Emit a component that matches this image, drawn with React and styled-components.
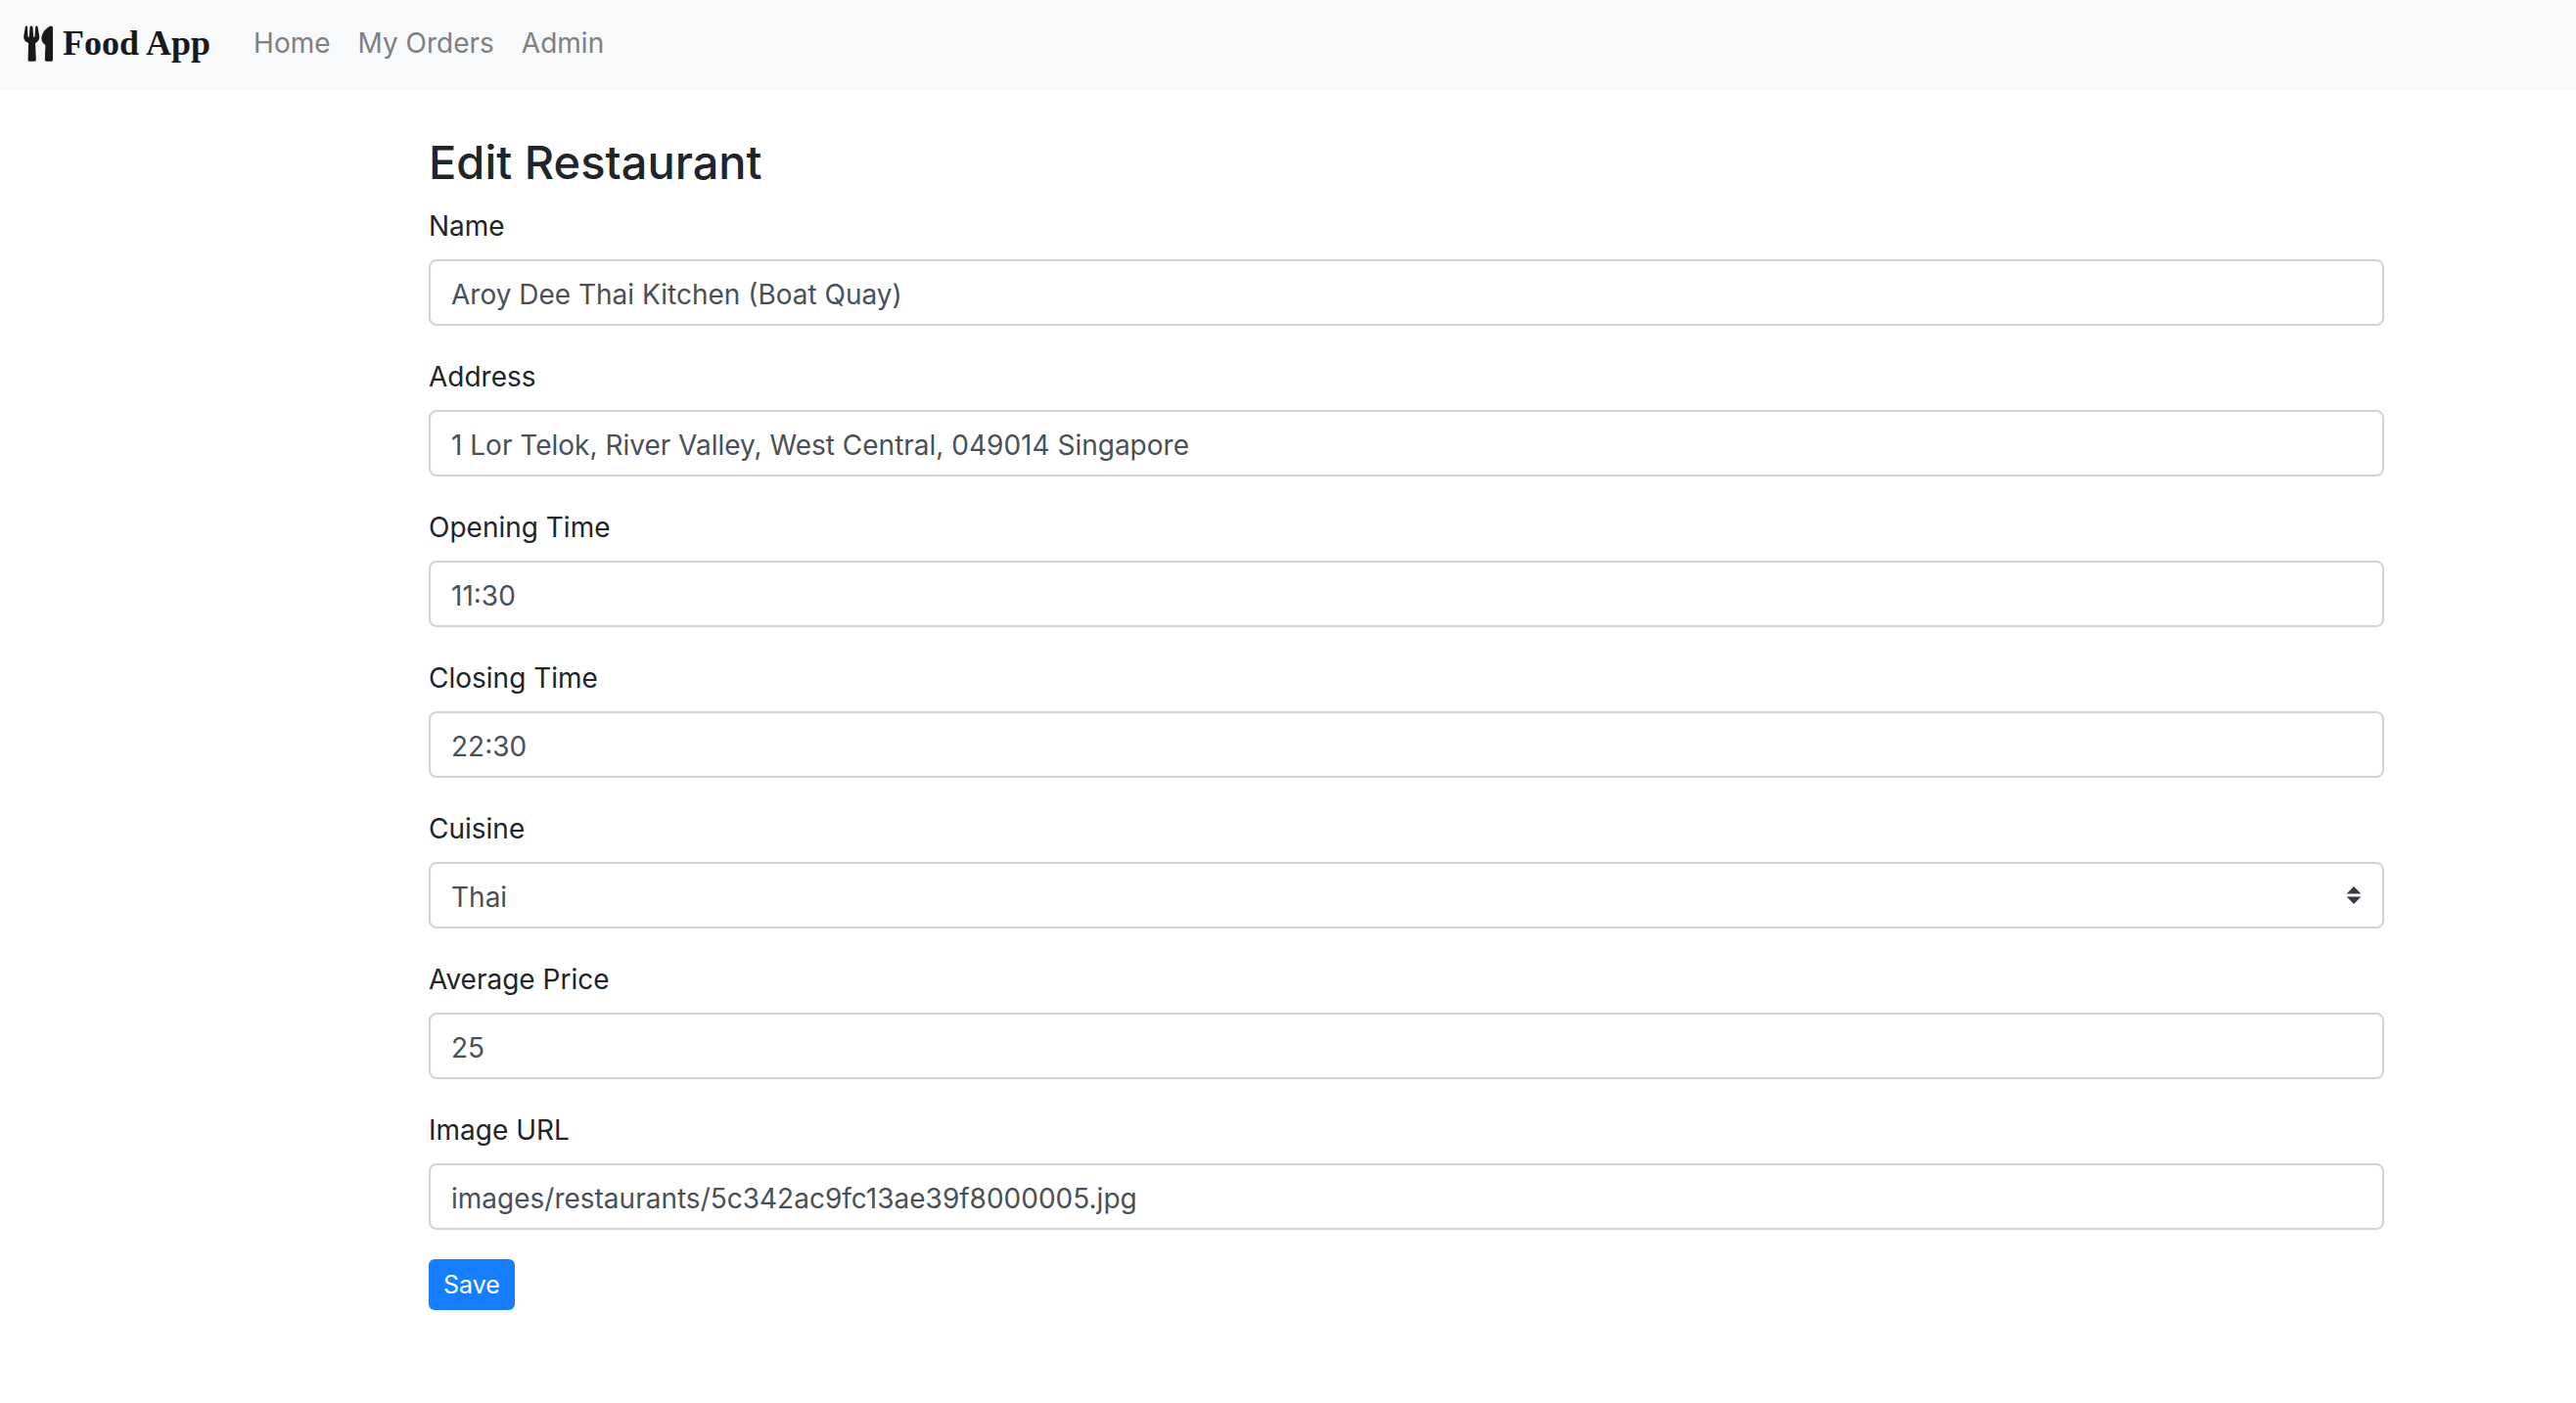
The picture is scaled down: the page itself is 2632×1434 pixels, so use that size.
import React, { useState } from "react";
import styled, { createGlobalStyle } from "styled-components";

const GlobalStyle = createGlobalStyle`
  *, *::before, *::after { box-sizing: border-box; }
  body {
    margin: 0;
    background: #fff;
    color: #212529;
    font-family: Inter, "Liberation Sans", sans-serif;
    font-size: 28px;
    line-height: 44px;
  }
`;

const Navbar = styled.nav`
  display: flex;
  align-items: center;
  height: 92px;
  padding: 0 24px;
  background: #f8f9fb;
`;

const Brand = styled.a`
  display: flex;
  align-items: center;
  gap: 10px;
  margin-right: 44px;
  padding-bottom: 4px;
  color: #1a1a1a;
  font-family: "Liberation Serif", serif;
  font-size: 36px;
  font-weight: 700;
  text-decoration: none;
  white-space: nowrap;
`;

const NavLinks = styled.div`
  display: flex;
  gap: 28px;
  padding-bottom: 4px;
`;

const NavLink = styled.a`
  color: #7f8081;
  text-decoration: none;
`;

const Page = styled.main`
  display: grid;
  grid-template-columns: 438fr 1998fr 196fr;
  padding: 44px 0;
`;

const Form = styled.form`
  grid-column: 2;
`;

const Title = styled.h1`
  margin: 0 0 13px;
  font-size: 47px;
  font-weight: 500;
  line-height: 60px;
`;

const Field = styled.div`
  display: flex;
  flex-direction: column;
  gap: 12px;
  margin-bottom: 30px;
`;

const Label = styled.label`
  line-height: 44px;
`;

const Control = styled.input`
  width: 100%;
  height: 68px;
  padding: 3px 21px 0;
  border: 2px solid #ced4da;
  border-radius: 8px;
  background: #fff;
  color: #495057;
  font: inherit;
  appearance: none;
`;

const SelectWrap = styled.div`
  display: grid;
  align-items: center;

  > * { grid-area: 1 / 1; }

  > svg {
    justify-self: end;
    margin-right: 23px;
    pointer-events: none;
  }
`;

const SaveButton = styled.button`
  height: 52px;
  padding: 0 15px;
  border: 0;
  border-radius: 6px;
  background: #177fff;
  color: #fff;
  font: inherit;
  font-size: 25px;
  line-height: 38px;
`;

const CutleryIcon = () => (
  <svg width="30" height="37" viewBox="0 0 30 37" fill="currentColor" aria-hidden="true">
    <path d="M1.8 1.4Q2 .4 3 .4T4 1.5L4.5 11Q4.6 12 5.2 12T5.8 11L6.6 1.5Q6.7.4 8 .4T9.4 1.5L10.2 11Q10.3 12 10.9 12T11.5 11L12.2 1.5Q12.3.4 13.3.4T14.6 1.4L16.3 11.5C16.5 14.5 14.6 16.8 12.1 18L12.8 35Q12.8 36.7 11 36.7H6Q4.5 36.7 4.6 35L5.1 18C2.2 16.8 0 14.6.2 11.5Z" />
    <path d="M30 2Q30 .4 28 .4C23 2 18.4 8 18.4 13.5C18.4 16.3 20 18.4 22.4 20.2L21.8 35Q21.8 36.7 23.5 36.7H28.3Q30 36.7 30 35Z" />
  </svg>
);

const SortIcon = () => (
  <svg width="16" height="20" viewBox="0 0 16 20" fill="#343a40" aria-hidden="true">
    <path d="M8 1L15.4 8.4H.6ZM8 19L15.4 11.6H.6Z" />
  </svg>
);

const LINKS = ["Home", "My Orders", "Admin"];

const FIELDS = [
  { id: "name", label: "Name" },
  { id: "address", label: "Address" },
  { id: "openingTime", label: "Opening Time" },
  { id: "closingTime", label: "Closing Time" },
  { id: "cuisine", label: "Cuisine", options: ["Thai", "Chinese", "Japanese", "Western"] },
  { id: "averagePrice", label: "Average Price" },
  { id: "imageUrl", label: "Image URL" },
];

const RESTAURANT = {
  name: "Aroy Dee Thai Kitchen (Boat Quay)",
  address: "1 Lor Telok, River Valley, West Central, 049014 Singapore",
  openingTime: "11:30",
  closingTime: "22:30",
  cuisine: "Thai",
  averagePrice: "25",
  imageUrl: "images/restaurants/5c342ac9fc13ae39f8000005.jpg",
};

export default function App() {
  const [values, setValues] = useState(RESTAURANT);
  const update = (e) => setValues({ ...values, [e.target.name]: e.target.value });

  return (
    <>
      <GlobalStyle />
      <Navbar>
        <Brand href="#">
          <CutleryIcon />
          Food App
        </Brand>
        <NavLinks>
          {LINKS.map((link) => (
            <NavLink key={link} href="#">{link}</NavLink>
          ))}
        </NavLinks>
      </Navbar>
      <Page>
        <Form onSubmit={(e) => e.preventDefault()}>
          <Title>Edit Restaurant</Title>
          {FIELDS.map(({ id, label, options }) => (
            <Field key={id}>
              <Label htmlFor={id}>{label}</Label>
              {options ? (
                <SelectWrap>
                  <Control as="select" id={id} name={id} value={values[id]} onChange={update}>
                    {options.map((option) => (
                      <option key={option}>{option}</option>
                    ))}
                  </Control>
                  <SortIcon />
                </SelectWrap>
              ) : (
                <Control type="text" id={id} name={id} value={values[id]} onChange={update} />
              )}
            </Field>
          ))}
          <SaveButton type="submit">Save</SaveButton>
        </Form>
      </Page>
    </>
  );
}
